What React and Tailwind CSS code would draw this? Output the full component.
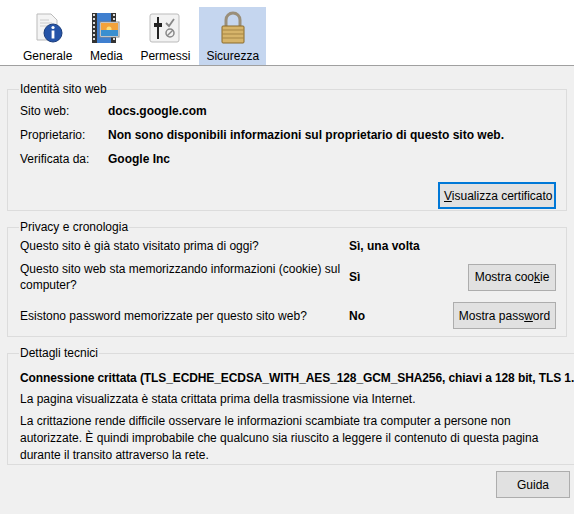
export default function App() {
  const Tab = ({ label, icon, sel }) => (
    <div className={`flex flex-col items-center pt-[5px] h-[58px] ${sel ? "bg-[#c5d6ef]" : ""} px-[7px]`}>
      <div className="h-[32px] w-[36px] flex items-center justify-center">{icon}</div>
      <div className="mt-[4px] leading-[16px]">{label}</div>
    </div>
  );
  const Btn = ({ children, cls = "" }) => (
    <button className={`h-[27px] px-[4px] whitespace-nowrap bg-[#e1e1e1] border border-[#adadad] text-[12px] ${cls}`}>{children}</button>
  );
  return (
    <div className="w-[574px] h-[514px] bg-[#f0f0f0] text-[12px] text-black overflow-hidden" style={{ fontFamily: '"Liberation Sans",Arial,sans-serif' }}>
      <div className="bg-white h-[65px] border-b border-[#a0a0a0] flex items-end pl-[16px] gap-[2px] box-content">
        <Tab label="Generale" icon={
          <svg width="34" height="32" viewBox="0 0 34 32"><path d="M6 2h14l6 6v20H6z" fill="#f4f4f4" stroke="#bbb"/><path d="M9 8h9M9 11h12M9 14h8" stroke="#ccc"/><circle cx="22" cy="21" r="9" fill="#2554a8" stroke="#1a3c7a"/><circle cx="22" cy="15.5" r="1.6" fill="#fff"/><rect x="20.6" y="18.5" width="2.8" height="8" fill="#fff"/></svg>} />
        <Tab label="Media" icon={
          <svg width="34" height="32" viewBox="0 0 34 32"><rect x="3" y="1" width="24" height="30" fill="#333"/><rect x="8" y="1" width="14" height="30" fill="#3f7fcf"/><path d="M4 3h2M4 7h2M4 11h2M4 15h2M4 19h2M4 23h2M4 27h2M24 3h2M24 7h2M24 11h2M24 15h2M24 19h2M24 23h2M24 27h2" stroke="#ddd" strokeWidth="2"/><rect x="11" y="10" width="19" height="15" fill="#fff" stroke="#888"/><rect x="12" y="11" width="17" height="7" fill="#f3a23b"/><circle cx="20" cy="17" r="2.5" fill="#ffe07a"/><rect x="12" y="18" width="17" height="6" fill="#3a8fd0"/></svg>} />
        <Tab label="Permessi" icon={
          <svg width="34" height="32" viewBox="0 0 34 32"><rect x="2" y="2" width="29" height="28" rx="2" fill="#f2f2f2" stroke="#bbb"/><path d="M10 5v22" stroke="#222" strokeWidth="2"/><rect x="6" y="11" width="8" height="4" fill="#222"/><path d="M18 11l3 3 5-7" stroke="#888" strokeWidth="1.8" fill="none"/><circle cx="22" cy="21" r="4" stroke="#888" strokeWidth="1.5" fill="none"/><path d="M19 24l6-6" stroke="#888" strokeWidth="1.5"/></svg>} />
        <Tab sel label="Sicurezza" icon={
          <svg width="34" height="34" viewBox="0 0 34 34"><path d="M10 15V9a7 7 0 0 1 14 0v6" stroke="#9a8f7a" strokeWidth="3" fill="none"/><rect x="6" y="15" width="22" height="17" rx="1" fill="#d6b46a" stroke="#8a6a2a"/><path d="M6 19h22M6 23h22M6 27h22" stroke="#a58544"/></svg>} />
      </div>
      <div className="px-[7px] pt-[15px]">
        <fieldset className="border border-[#dcdcdc] px-[12px] pb-[6px] h-[130px]">
          <legend className="px-[1px] -ml-[1px] leading-[16px]">Identità sito web</legend>
          <div className="grid grid-cols-[88px_1fr] gap-y-[4px] mt-[4px] leading-[20px]">
            <div>Sito web:</div><div className="font-bold">docs.google.com</div>
            <div>Proprietario:</div><div className="font-bold">Non sono disponibili informazioni sul proprietario di questo sito web.</div>
            <div>Verificata da:</div><div className="font-bold">Google Inc</div>
          </div>
          <div className="flex justify-end mt-[13px] -mr-[2px]">
            <Btn cls="border-2 !border-[#0078d7] w-[118px]"><u>V</u>isualizza certificato</Btn>
          </div>
        </fieldset>
        <fieldset className="border border-[#dcdcdc] px-[12px] mt-[8px] h-[118px]">
          <legend className="px-[1px] -ml-[1px] leading-[16px]">Privacy e cronologia</legend>
          <div className="grid grid-cols-[329px_1fr_auto] items-center leading-[16px] -mr-[2px]">
            <div className="h-[22px] flex items-center">Questo sito è già stato visitato prima di oggi?</div><div className="font-bold">Sì, una volta</div><div></div>
            <div className="mt-[4px]">Questo sito web sta memorizzando informazioni (cookie) sul computer?</div><div className="font-bold mt-[4px]">Sì</div><div className="mt-[4px] flex justify-end"><Btn cls="w-[88px]">Mostra coo<u>k</u>ie</Btn></div>
            <div className="mt-[9px]">Esistono password memorizzate per questo sito web?</div><div className="font-bold mt-[9px]">No</div><div className="mt-[9px] flex justify-end"><Btn cls="w-[103px]">Mostra pass<u>w</u>ord</Btn></div>
          </div>
        </fieldset>
        <fieldset className="border border-[#dcdcdc] px-[12px] mt-[8px] h-[120px] leading-[16px]">
          <legend className="px-[1px] -ml-[1px] leading-[16px]">Dettagli tecnici</legend>
          <div className="font-bold mt-[9px] whitespace-nowrap tracking-[-0.1px]">Connessione crittata (TLS_ECDHE_ECDSA_WITH_AES_128_GCM_SHA256, chiavi a 128 bit, TLS 1.2)</div>
          <div className="mt-[5px]">La pagina visualizzata è stata crittata prima della trasmissione via Internet.</div>
          <div className="mt-[6px] leading-[17px] pr-[10px]">La crittazione rende difficile osservare le informazioni scambiate tra computer a persone non autorizzate. È quindi improbabile che qualcuno sia riuscito a leggere il contenuto di questa pagina durante il transito attraverso la rete.</div>
        </fieldset>
        <div className="flex justify-end mt-[6px] -mr-[3px]">
          <Btn cls="w-[74px]">Guida</Btn>
        </div>
      </div>
    </div>
  );
}
